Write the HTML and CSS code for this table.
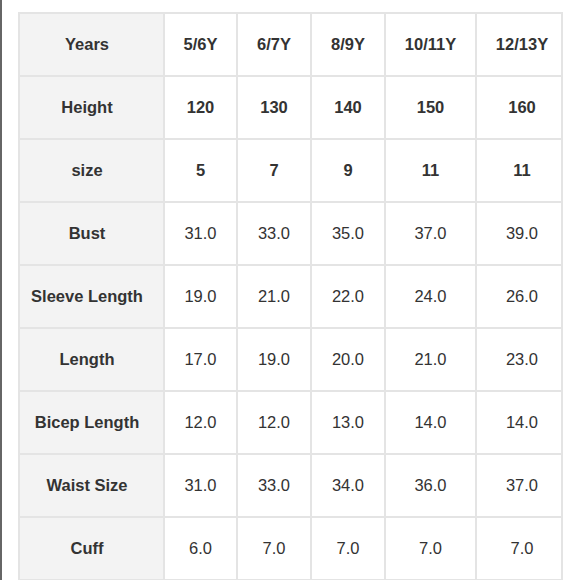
FILE: index.html
```html
<!DOCTYPE html>
<html>
<head>
<meta charset="utf-8">
<link rel="stylesheet" href="styles.css">
</head>
<body>
<div class="page">
  <div class="edge"></div>
  <div class="chart">
    <div class="cell label">Years</div><div class="cell bold">5/6Y</div><div class="cell bold">6/7Y</div><div class="cell bold">8/9Y</div><div class="cell bold">10/11Y</div><div class="cell bold last">12/13Y</div>
    <div class="cell label">Height</div><div class="cell bold">120</div><div class="cell bold">130</div><div class="cell bold">140</div><div class="cell bold">150</div><div class="cell bold last">160</div>
    <div class="cell label">size</div><div class="cell bold">5</div><div class="cell bold">7</div><div class="cell bold">9</div><div class="cell bold">11</div><div class="cell bold last">11</div>
    <div class="cell label">Bust</div><div class="cell">31.0</div><div class="cell">33.0</div><div class="cell">35.0</div><div class="cell">37.0</div><div class="cell last">39.0</div>
    <div class="cell label">Sleeve Length</div><div class="cell">19.0</div><div class="cell">21.0</div><div class="cell">22.0</div><div class="cell">24.0</div><div class="cell last">26.0</div>
    <div class="cell label">Length</div><div class="cell">17.0</div><div class="cell">19.0</div><div class="cell">20.0</div><div class="cell">21.0</div><div class="cell last">23.0</div>
    <div class="cell label">Bicep Length</div><div class="cell">12.0</div><div class="cell">12.0</div><div class="cell">13.0</div><div class="cell">14.0</div><div class="cell last">14.0</div>
    <div class="cell label">Waist Size</div><div class="cell">31.0</div><div class="cell">33.0</div><div class="cell">34.0</div><div class="cell">36.0</div><div class="cell last">37.0</div>
    <div class="cell label">Cuff</div><div class="cell">6.0</div><div class="cell">7.0</div><div class="cell">7.0</div><div class="cell">7.0</div><div class="cell last">7.0</div>
  </div>
</div>
</body>
</html>
```
FILE: styles.css
```css
html, body {
  margin: 0;
  padding: 0;
  background: #ffffff;
  overflow: hidden;
}
.page {
  display: flex;
  align-items: flex-start;
  width: 580px;
  height: 580px;
}
.edge {
  width: 2px;
  height: 580px;
  background: #666666;
  flex: none;
}
.chart {
  margin-left: 16px;
  margin-top: 12px;
  display: grid;
  grid-template-columns: 143px 71px 72px 72px 89px 84px;
  grid-auto-rows: 61px;
  gap: 2px;
  padding: 2px;
  background: #e4e4e4;
  font-family: "Liberation Sans", Arial, sans-serif;
  font-size: 16.5px;
  color: #333333;
}
.cell {
  background: #ffffff;
  display: flex;
  align-items: center;
  justify-content: center;
}
.label {
  background: #f3f3f3;
  font-weight: bold;
  padding-right: 9px;
}
.bold {
  font-weight: bold;
}
.last {
  padding-left: 6px;
}
```
